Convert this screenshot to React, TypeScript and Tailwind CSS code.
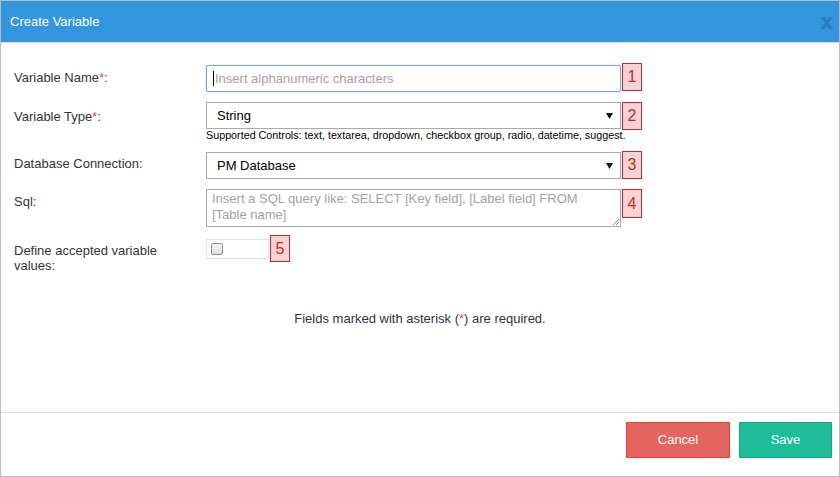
import React from 'react';

function Badge({ n, h = 'h-[28px]' }: { n: number; h?: string }) {
  return (
    <div
      className={`ml-px flex w-[20px] ${h} items-center justify-center border border-[#c9272c] bg-[#f8d3d3] text-[16px] leading-none text-[#c9272c]`}
    >
      {n}
    </div>
  );
}

function Req() {
  return <span className="text-[#e8474c]">*</span>;
}

function SelectBox({ value }: { value: string }) {
  return (
    <div className="flex h-[27px] w-[415px] items-center justify-between border border-[#a9a9a9] bg-white pl-[10px] pr-[7px] text-[13px] text-black">
      <span>{value}</span>
      <svg width="7" height="6" viewBox="0 0 7 6">
        <path d="M0 0 H7 L3.5 6 Z" fill="#111" />
      </svg>
    </div>
  );
}

export default function App() {
  return (
    <div className="flex h-[477px] w-[840px] flex-col border border-[#bdbdbd] bg-white font-['Liberation_Sans',Arial,sans-serif] text-[13px] text-[#33333d]">
      <div className="flex h-[42px] shrink-0 items-center justify-between border-b border-[#dcdcdc] bg-[#3396df] pl-[9px] pr-[6px]">
        <span className="text-[13px] text-white">Create Variable</span>
        <span className="text-[22px] font-bold leading-none text-[#2a7cbd] [text-shadow:0_0_1px_#2a7cbd]">x</span>
      </div>

      <div className="flex flex-1 flex-col px-[13px] pt-[20px]">
        {/* row 1 */}
        <div className="flex items-start">
          <label className="w-[192px] pt-[7px] leading-[15px]">
            Variable Name<Req />:
          </label>
          <div className="mt-[2px] flex h-[27px] w-[415px] items-center rounded-[2px] border border-[#7ea6e0] bg-white pl-[6px] shadow-[0_0_2px_#a9c6ee]">
            <span className="mr-px h-[15px] w-px bg-black" />
            <span className="text-[#a3a3a3]">Insert alphanumeric characters</span>
          </div>
          <Badge n={1} />
        </div>

        {/* row 2 */}
        <div className="mt-[10px] flex items-start">
          <label className="w-[192px] pt-[7px] leading-[15px]">
            Variable Type<Req />:
          </label>
          <div className="flex w-[415px] flex-col">
            <SelectBox value="String" />
            <span className="whitespace-nowrap text-[10.75px] leading-[13px] text-black">
              Supported Controls: text, textarea, dropdown, checkbox group, radio, datetime, suggest.
            </span>
          </div>
          <Badge n={2} />
        </div>

        {/* row 3 */}
        <div className="mt-[10px] flex items-start">
          <label className="w-[192px] pt-[4px] leading-[15px]">Database Connection:</label>
          <SelectBox value="PM Database" />
          <div className="-mt-px">
            <Badge n={3} />
          </div>
        </div>

        {/* row 4 */}
        <div className="mt-[10px] flex items-start">
          <label className="w-[192px] pt-[5px] leading-[15px]">Sql:</label>
          <div className="relative h-[38px] w-[415px] border border-[#a9a9a9] bg-white px-[5px] pt-[1px] leading-[16px] text-[#a3a3a3]">
            Insert a SQL query like: SELECT [Key field], [Label field] FROM [Table name]
            <svg className="absolute bottom-px right-px" width="7" height="7" viewBox="0 0 7 7">
              <path d="M1 7 L7 1 M4 7 L7 4" stroke="#888" strokeWidth="1" />
            </svg>
          </div>
          <Badge n={4} h="h-[29px]" />
        </div>

        {/* row 5 */}
        <div className="mt-[8px] flex items-start">
          <label className="w-[192px] pt-[8px] leading-[15px]">
            Define accepted variable
            <br />
            values:
          </label>
          <div className="mt-[4px] flex h-[20px] w-[63px] items-center border border-[#e3e3e3] bg-white pl-[4px]">
            <span className="h-[12px] w-[12px] rounded-[2px] border border-[#8f8f8f] bg-gradient-to-b from-[#f4f4f4] to-[#dedede]" />
          </div>
          <Badge n={5} h="h-[27px]" />
        </div>

        <p className="mt-[38px] text-center leading-[15px]">
          Fields marked with asterisk (<Req />) are required.
        </p>
      </div>

      <div className="flex h-[64px] shrink-0 items-start justify-end gap-[9px] border-t border-[#dcdcdc] pr-[7px] pt-[9px]">
        <button className="h-[36px] w-[104px] border border-[#d9473f] bg-[#e4655f] text-[13px] text-white">
          Cancel
        </button>
        <button className="h-[36px] w-[93px] border border-[#19a887] bg-[#1fbc99] text-[13px] text-white">
          Save
        </button>
      </div>
    </div>
  );
}
